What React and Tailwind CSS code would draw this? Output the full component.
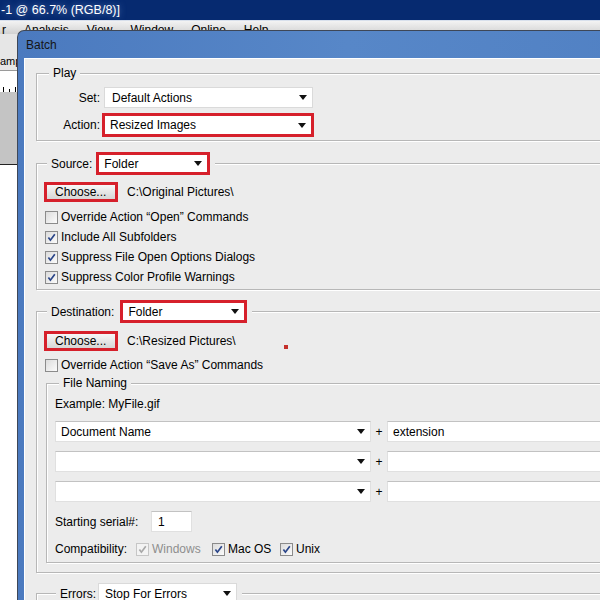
import React from "react";

const RED = "border-[3px] border-[#d6202b]";
const FIELD = "bg-white border border-[#e0e0e0] border-t-[#c2c2c2]";

function Caret() {
  return (
    <svg width="8" height="5" viewBox="0 0 8 5" className="shrink-0">
      <path d="M0 0H8L4 5Z" fill="#111" />
    </svg>
  );
}

function Dropdown({ value = "", className = "" }) {
  return (
    <div className={`flex items-center justify-between bg-white pl-[5px] pr-[5px] ${className}`}>
      <span className="whitespace-nowrap">{value}</span>
      <Caret />
    </div>
  );
}

function Check({ checked, disabled }) {
  return (
    <span
      className={`flex h-[13px] w-[13px] shrink-0 items-center justify-center border ${
        disabled
          ? "border-[#c6c6c6] bg-[#f3f3f3]"
          : "border-[#8b8b8b] bg-linear-to-br from-[#dcdcdc] to-[#fbfbfb]"
      }`}
    >
      {checked && (
        <svg width="9" height="9" viewBox="0 0 9 9">
          <path
            d="M1.4 4.6L3.4 7.2L7.8 1.3"
            fill="none"
            stroke={disabled ? "#a8a8a8" : "#2a4589"}
            strokeWidth="1.7"
          />
        </svg>
      )}
    </span>
  );
}

function CheckRow({ checked, label }) {
  return (
    <div className="flex h-[20px] items-center gap-[3px] pl-[8px]">
      <Check checked={checked} />
      <span className="whitespace-nowrap">{label}</span>
    </div>
  );
}

function Group({ legend, legendClass = "", className = "", children }) {
  return (
    <fieldset
      className={`border border-[#b7b7b7] shadow-[inset_1px_1px_0_#fff,1px_1px_0_#fff] ${className}`}
    >
      <legend className={`bg-[#ececec] px-[4px] leading-[14px] ${legendClass}`}>{legend}</legend>
      {children}
    </fieldset>
  );
}

function ChooseButton() {
  return (
    <div className={`ml-[7px] h-[20px] w-[74px] ${RED}`}>
      <div className="flex h-full items-center bg-linear-to-b from-[#f7f7f7] to-[#d6d6d6] pl-[8px] leading-[12px]">
        Choose...
      </div>
    </div>
  );
}

function NameRow({ value, ext, className = "" }) {
  return (
    <div className={`flex h-[21px] items-center pl-[8px] ${className}`}>
      <Dropdown value={value} className={`h-[21px] w-[316px] ${FIELD}`} />
      <span className="w-[16px] text-center">+</span>
      <div className={`flex h-[21px] flex-1 items-center pl-[5px] ${FIELD}`}>{ext}</div>
    </div>
  );
}

export default function App() {
  return (
    <div className="relative h-[600px] w-[600px] overflow-hidden bg-white font-['Liberation_Sans',Arial,sans-serif] text-[12px] leading-[14px] text-black">
      {/* background app: Photoshop window */}
      <div className="h-[20px] bg-[#062a70] pl-[1px] text-[12.5px] leading-[20px] text-white [text-shadow:0_0_6px_rgba(140,170,225,0.7)]">
        -1 @ 66.7% (RGB/8)]
      </div>
      <div className="flex h-[14px] gap-[18px] overflow-hidden border-t border-[#d8e0ec] bg-linear-to-b from-[#f3f3f3] to-[#d2d2d2] pt-[2px] text-[12px] leading-[14px]">
        <span className="pl-[2px]">r</span>
        <span>Analysis</span>
        <span>View</span>
        <span>Window</span>
        <span>Online</span>
        <span>Help</span>
      </div>
      <div className="w-[17px] overflow-hidden">
        <div className="h-[36px] bg-[#e6e6e6] pt-[20px] text-[11px] leading-[14px] whitespace-nowrap">ampl</div>
        <div className="flex h-[22px] items-end gap-[5px] border-t border-[#9a9a9a] bg-white pl-[3px]">
          <span className="h-[5px] w-px bg-black" />
          <span className="h-[3px] w-px bg-black" />
          <span className="h-[5px] w-px bg-black" />
        </div>
        <div className="h-[73px] border-b border-[#222] bg-[#c4c4c4]" />
      </div>

      {/* Batch dialog window */}
      <div className="absolute left-[17px] top-[30px] flex h-[580px] w-[660px] flex-col rounded-tl-[7px] border-l border-t border-[#3e4757] bg-linear-to-r from-[#4b7abf] via-[#5787c8] to-[#5080c3]">
        <div className="flex h-[27px] shrink-0 items-center pl-[8px] text-[12px] text-[#151515]">Batch</div>
        <div className="flex-1 pl-[6px]">
          <div className="flex h-full flex-col border-l border-t border-white bg-[#ececec] pl-[11px]">
            {/* Play */}
            <Group legend="Play" legendClass="ml-[12px]" className="mt-[7px]">
              <div className="pt-[7px] pb-[3px]">
                <div className="flex h-[21px] items-center">
                  <span className="w-[63px] text-right">Set:</span>
                  <Dropdown
                    value="Default Actions"
                    className="ml-[4px] h-[21px] w-[209px] border border-[#dadada] pl-[7px]"
                  />
                </div>
                <div className="mt-[5px] flex h-[24px] items-center">
                  <span className="w-[63px] text-right">Action:</span>
                  <div className={`ml-[2px] h-[24px] w-[212px] ${RED}`}>
                    <Dropdown value="Resized Images" className="h-full pl-[5px] pr-[2px]" />
                  </div>
                </div>
              </div>
            </Group>

            {/* Source */}
            <Group
              className="mt-[11px]"
              legendClass="ml-[10px] pr-[5px]"
              legend={
                <div className="flex items-center">
                  <span>Source:</span>
                  <div className={`ml-[4px] h-[23px] w-[114px] ${RED}`}>
                    <Dropdown value="Folder" className="h-full pl-[4px] pr-[3px]" />
                  </div>
                </div>
              }
            >
              <div className="pt-[7px] pb-[2px]">
                <div className="flex h-[20px] items-center">
                  <ChooseButton />
                  <span className="ml-[9px]">C:\Original Pictures\</span>
                </div>
                <div className="mt-[5px]">
                  <CheckRow label={"Override Action \u201COpen\u201D Commands"} />
                  <CheckRow checked label="Include All Subfolders" />
                  <CheckRow checked label="Suppress File Open Options Dialogs" />
                  <CheckRow checked label="Suppress Color Profile Warnings" />
                </div>
              </div>
            </Group>

            {/* Destination */}
            <Group
              className="mt-[10px]"
              legendClass="ml-[10px] pr-[5px]"
              legend={
                <div className="flex items-center">
                  <span>Destination:</span>
                  <div className={`ml-[6px] h-[23px] w-[127px] ${RED}`}>
                    <Dropdown value="Folder" className="h-full pl-[4px] pr-[3px]" />
                  </div>
                </div>
              }
            >
              <div className="pt-[8px] pb-[9px]">
                <div className="flex h-[20px] items-center">
                  <ChooseButton />
                  <span className="ml-[9px] w-[150px]">C:\Resized Pictures\</span>
                  <span className="mb-[2px] ml-[7px] h-[4px] w-[4px] self-end bg-[#c4302b]" />
                </div>
                <div className="mt-[4px]">
                  <CheckRow label={"Override Action \u201CSave As\u201D Commands"} />
                </div>

                {/* File Naming */}
                <Group legend="File Naming" legendClass="ml-[12px]" className="mt-[1px] ml-[9px]">
                  <div className="pb-[4px]">
                    <div className="mt-[7px] h-[14px] pl-[8px]">Example: MyFile.gif</div>
                    <NameRow className="mt-[10px]" value="Document Name" ext="extension" />
                    <NameRow className="mt-[9px]" />
                    <NameRow className="mt-[9px]" />
                    <div className="mt-[9px] flex h-[21px] items-center pl-[8px]">
                      <span className="w-[96px]">Starting serial#:</span>
                      <div className={`flex h-[21px] w-[41px] items-center pl-[6px] ${FIELD}`}>1</div>
                    </div>
                    <div className="mt-[8px] flex h-[18px] items-center pl-[8px]">
                      <span className="w-[81px]">Compatibility:</span>
                      <div className="flex w-[76px] items-center gap-[3px]">
                        <Check checked disabled />
                        <span className="text-[#8e8e8e]">Windows</span>
                      </div>
                      <div className="flex w-[68px] items-center gap-[3px]">
                        <Check checked />
                        <span>Mac OS</span>
                      </div>
                      <div className="flex items-center gap-[3px]">
                        <Check checked />
                        <span>Unix</span>
                      </div>
                    </div>
                  </div>
                </Group>
              </div>
            </Group>

            {/* Errors */}
            <Group
              className="mt-[10px] h-[60px]"
              legendClass="ml-[19px] pr-[5px]"
              legend={
                <div className="flex items-center">
                  <span>Errors:</span>
                  <Dropdown
                    value="Stop For Errors"
                    className="ml-[2px] h-[21px] w-[139px] border border-[#dadada] pl-[6px]"
                  />
                </div>
              }
            />
          </div>
        </div>
      </div>
    </div>
  );
}
